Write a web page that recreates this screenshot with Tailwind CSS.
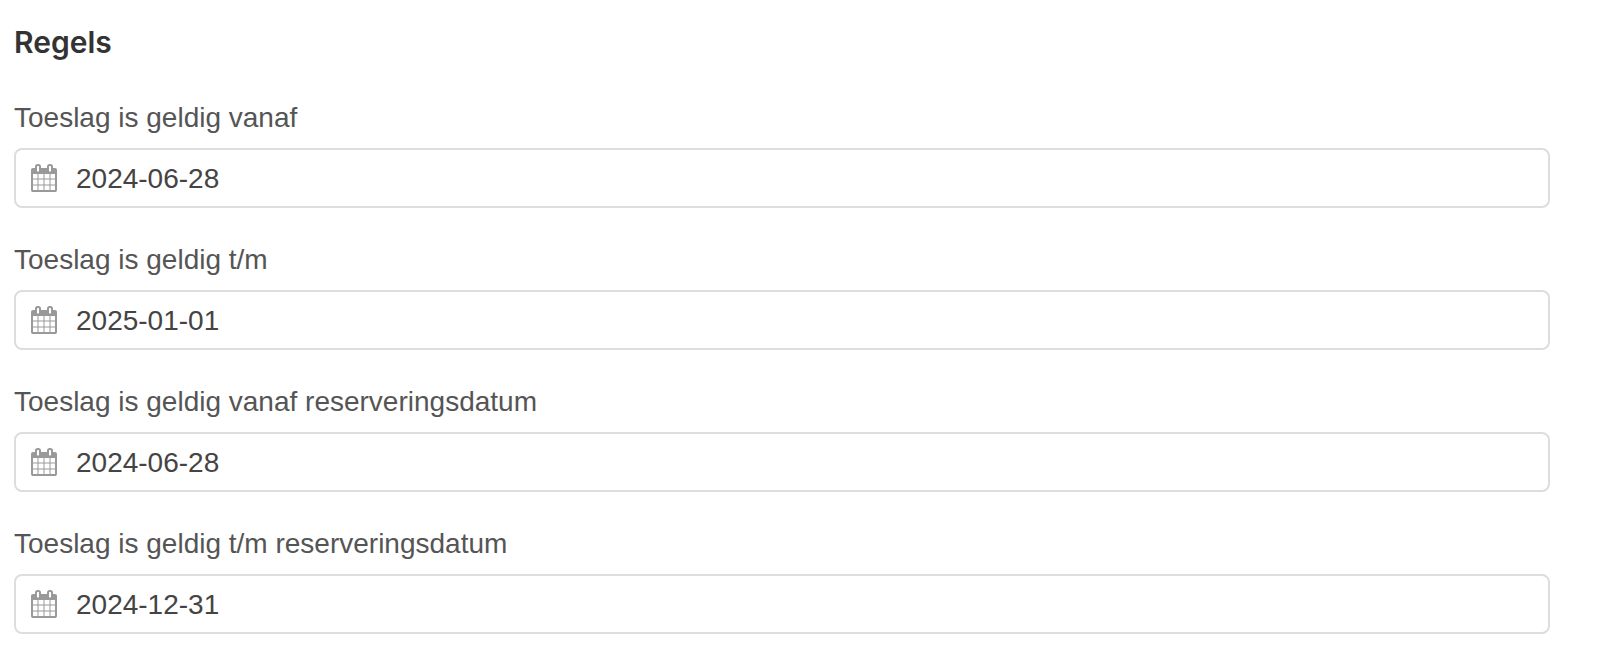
<!DOCTYPE html>
<html lang="nl">
<head>
  <meta charset="UTF-8">
  <meta name="viewport" content="width=device-width, initial-scale=1">
  <title>Regels</title>
  <script src="https://cdn.jsdelivr.net/npm/@tailwindcss/browser@4"></script>
</head>
<body class="bg-white font-['Liberation_Sans',Arial,sans-serif] text-[28px] text-[#555]">
  <!-- Calendar icon, shared by all date fields -->
  <svg class="hidden" aria-hidden="true">
    <symbol id="calendar" viewBox="64 0 1664 1792">
      <path d="M192 1664h288v-288h-288v288zm352 0h320v-288h-320v288zm-352-352h288v-320h-288v320zm352 0h320v-320h-320v320zm-352-384h288v-288h-288v288zm736 736h320v-288h-320v288zm-384-736h320v-288h-320v288zm768 736h288v-288h-288v288zm-384-352h320v-320h-320v320zm-352-864v-288q0-13-9.5-22.5t-22.5-9.5h-64q-13 0-22.5 9.5t-9.5 22.5v288q0 13 9.5 22.5t22.5 9.5h64q13 0 22.5-9.5t9.5-22.5zm736 864h288v-320h-288v320zm-384-384h320v-288h-320v288zm384 0h288v-288h-288v288zm32-480v-288q0-13-9.5-22.5t-22.5-9.5h-64q-13 0-22.5 9.5t-9.5 22.5v288q0 13 9.5 22.5t22.5 9.5h64q13 0 22.5-9.5t9.5-22.5zm384-64v1280q0 52-38 90t-90 38h-1408q-52 0-90-38t-38-90v-1280q0-52 38-90t90-38h128v-96q0-66 47-113t113-47h64q66 0 113 47t47 113v96h384v-96q0-66 47-113t113-47h64q66 0 113 47t47 113v96h128q52 0 90 38t38 90z"/>
    </symbol>
  </svg>

  <form class="pt-6 pr-[50px] pb-9 pl-[14px]">
    <h2 class="mb-10 font-[Inter,sans-serif] text-[30px] leading-9 font-semibold text-[#333]">Regels</h2>

    <div class="space-y-[34px]">
      <div>
        <label for="valid-from" class="mb-3 block leading-9">Toeslag is geldig vanaf</label>
        <div class="flex h-[60px] items-center gap-[19px] rounded-lg border-2 border-[#ddd] px-[15px]">
          <svg class="h-7 w-[26px] shrink-0 fill-[#999]" aria-hidden="true"><use href="#calendar"/></svg>
          <input id="valid-from" type="text" value="2024-06-28" class="min-w-0 flex-1 pt-0.5 text-[#444] outline-none">
        </div>
      </div>

      <div>
        <label for="valid-to" class="mb-3 block leading-9">Toeslag is geldig t/m</label>
        <div class="flex h-[60px] items-center gap-[19px] rounded-lg border-2 border-[#ddd] px-[15px]">
          <svg class="h-7 w-[26px] shrink-0 fill-[#999]" aria-hidden="true"><use href="#calendar"/></svg>
          <input id="valid-to" type="text" value="2025-01-01" class="min-w-0 flex-1 pt-0.5 text-[#444] outline-none">
        </div>
      </div>

      <div>
        <label for="booking-from" class="mb-3 block leading-9">Toeslag is geldig vanaf reserveringsdatum</label>
        <div class="flex h-[60px] items-center gap-[19px] rounded-lg border-2 border-[#ddd] px-[15px]">
          <svg class="h-7 w-[26px] shrink-0 fill-[#999]" aria-hidden="true"><use href="#calendar"/></svg>
          <input id="booking-from" type="text" value="2024-06-28" class="min-w-0 flex-1 pt-0.5 text-[#444] outline-none">
        </div>
      </div>

      <div>
        <label for="booking-to" class="mb-3 block leading-9">Toeslag is geldig t/m reserveringsdatum</label>
        <div class="flex h-[60px] items-center gap-[19px] rounded-lg border-2 border-[#ddd] px-[15px]">
          <svg class="h-7 w-[26px] shrink-0 fill-[#999]" aria-hidden="true"><use href="#calendar"/></svg>
          <input id="booking-to" type="text" value="2024-12-31" class="min-w-0 flex-1 pt-0.5 text-[#444] outline-none">
        </div>
      </div>
    </div>
  </form>
</body>
</html>
